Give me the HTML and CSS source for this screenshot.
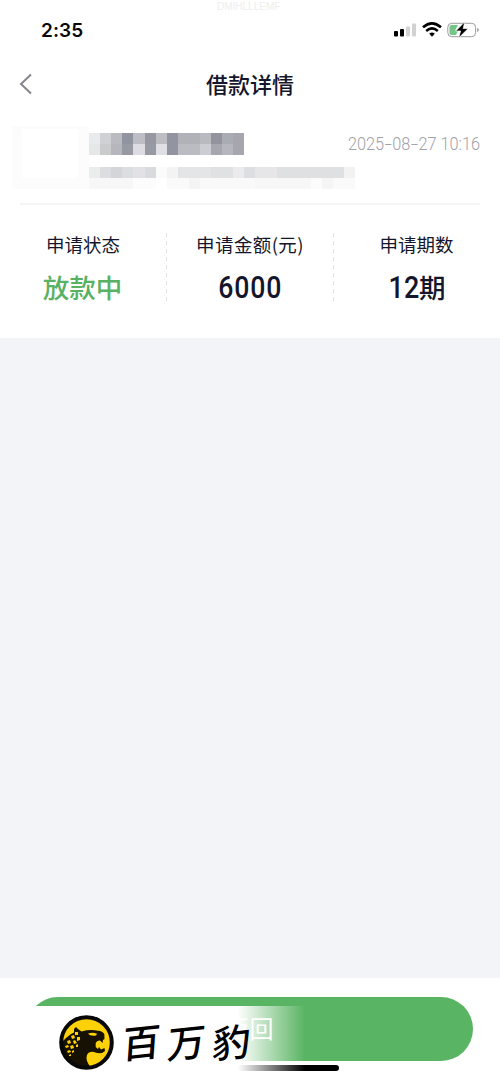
FILE: index.html
```html
<!DOCTYPE html>
<html lang="zh-CN">
<head>
<meta charset="UTF-8">
<title>借款详情</title>
<link rel="stylesheet" href="styles.css">
</head>
<body>
<div class="screen">
  <div class="faint-id">DMIHLLLEMF</div>
  <div class="status-bar">
    <span class="clock">2:35</span>
    <svg class="status-icons" width="88" height="20" viewBox="0 0 88 20">
      <rect x="1" y="11" width="4" height="5.5" rx="1"/>
      <rect x="7" y="9" width="4" height="7.500" rx="1"/>
      <rect x="13" y="6.500" width="4" height="10" rx="1" fill="#d2d2d2"/>
      <rect x="19" y="3.500" width="4" height="13" rx="1" fill="#d2d2d2"/>
      <g fill="none" stroke="#000" stroke-width="2.600">
        <path d="M30 7.300Q39 -0.500 48 7.300"/>
        <path d="M33.200 10.900Q39 6 44.800 10.900"/>
      </g>
      <path d="M39 16.700L36.200 13.700Q39 11.300 41.800 13.700Z"/>
      <rect x="54.800" y="3.300" width="27.800" height="13.400" rx="4" fill="#fff" stroke="#9b9b9b"/>
      <path d="M58.500 5H65L62 10.500H65L63 15H58.500Q56.500 15 56.500 13V7Q56.500 5 58.500 5Z" fill="#74c587"/>
      <path d="M84 8Q86 8.500 86 10T84 12Z" fill="#aaa"/>
      <path d="M71.800 1.800L62.700 11H67.600L65.600 18L75.200 8.500H70.200Z" stroke="#fff" stroke-width=".7"/>
    </svg>
  </div>
  <header class="nav">
    <svg class="back" width="14" height="22" viewBox="0 0 14 22"><path d="M12 1.500L2 11L12 20.500" fill="none" stroke="#85868c" stroke-width="2"/></svg>
    <h1 class="title">借款详情</h1>
  </header>
  <section class="product">
    <div class="logo-mask"></div>
    <svg class="mosaic" width="270" height="56" viewBox="0 0 270 56" shape-rendering="crispEdges">
      <path d="M0 0h11v11H0z" fill="#e9eaeb"/><path d="M11 0h11v11H11z" fill="#d0d1d4"/><path d="M22 0h11v11H22z" fill="#b9bbc1"/><path d="M33 0h11v11H33z" fill="#91949e"/><path d="M44 0h12v11H44z" fill="#bdbec5"/><path d="M56 0h11v11H56z" fill="#9698a1"/><path d="M67 0h11v11H67z" fill="#bdbec4"/><path d="M78 0h11v11H78z" fill="#9295a0"/><path d="M89 0h22v11H89z" fill="#b0b2b7"/><path d="M111 0h11v11H111z" fill="#b8bac0"/><path d="M122 0h11v11H122z" fill="#91949d"/><path d="M133 0h11v11H133z" fill="#aaacb3"/><path d="M144 0h11v11H144z" fill="#a5a6ae"/>
      <path d="M0 11h11v11H0z" fill="#e6e8e8"/><path d="M11 11h11v11H11z" fill="#c9cbcc"/><path d="M22 11h11v11H22z" fill="#b5b7bd"/><path d="M33 11h11v11H33z" fill="#989aa3"/><path d="M44 11h12v11H44z" fill="#dcdce2"/><path d="M56 11h11v11H56z" fill="#989aa3"/><path d="M67 11h11v11H67z" fill="#dfe0e5"/><path d="M78 11h11v11H78z" fill="#9295a0"/><path d="M89 11h22v11H89z" fill="#bbbcc1"/><path d="M111 11h11v11H111z" fill="#cccdd3"/><path d="M122 11h11v11H122z" fill="#a6a8b0"/><path d="M133 11h11v11H133z" fill="#b6b7be"/><path d="M144 11h11v11H144z" fill="#a5a6ae"/>
      <path d="M0 34h11v11H0z" fill="#ebecec"/><path d="M11 34h11v11H11z" fill="#dcdde0"/><path d="M22 34h11v11H22z" fill="#d4d5d9"/><path d="M33 34h11v11H33z" fill="#dcdde0"/><path d="M44 34h12v11H44z" fill="#e2e2e6"/><path d="M56 34h11v11H56z" fill="#d9dade"/><path d="M67 34h11v11H67z" fill="#fbfbfb"/><path d="M78 34h11v11H78z" fill="#f3f3f3"/><path d="M89 34h33v11H89z" fill="#e4e5e7"/><path d="M122 34h22v11H122z" fill="#e0e1e3"/><path d="M144 34h11v11H144z" fill="#ebebed"/><path d="M155 34h11v11H155z" fill="#dddee1"/><path d="M166 34h22v11H166z" fill="#e6e6e8"/><path d="M188 34h67v11H188z" fill="#dfe0e2"/><path d="M255 34h11v11H255z" fill="#f2f2f2"/>
      <path d="M0 45h44v11H0z" fill="#f7f7f8"/><path d="M44 45h23v11H44z" fill="#fcfcfc"/><path d="M78 45h22v11H78z" fill="#fafafa"/><path d="M100 45h11v11H100z" fill="#f4f4f4"/><path d="M111 45h55v11H111z" fill="#f9f9f9"/><path d="M166 45h56v11H166z" fill="#f7f7f7"/><path d="M222 45h11v11H222z" fill="#fcfcfc"/><path d="M233 45h11v11H233z" fill="#f5f5f5"/><path d="M244 45h22v11H244z" fill="#fafafa"/>
    </svg>
    <time class="date">2025<i>-</i>08<i>-</i>27 10:16</time>
  </section>
  <section class="facts">
    <div class="fact"><div class="label">申请状态</div><div class="value green">放款中</div></div>
    <div class="fact"><div class="label wide">申请金额(元)</div><div class="value"><span class="number amount">6000</span></div></div>
    <div class="fact"><div class="label">申请期数</div><div class="value term-value"><span class="number terms">12</span>期</div></div>
  </section>
  <main class="blank"></main>
  <footer class="footer">
    <div class="button">返回</div>
    <div class="home-bar"></div>
    <div class="brand">
      <svg class="leopard" width="55" height="55" viewBox="0 0 55 55">
        <circle cx="27.500" cy="27.500" r="25.300" fill="#fdd108"/>
        <path d="M3 27L7 23L12 19L15 17.500V14L17 12L19 14L22.500 16.500Q31 14 39 15.700Q43.500 16 45.300 19L45.500 24L44 25L43.500 28L41 25.500Q38 25 36.700 28V32L39 34L40 32L42 34.500L45.500 33L46 36L43 38Q37 38.500 35 37Q30 36 28 40Q26 45 32 53Q22 55 14 50Q4 43 3 27Z" fill="#171103"/>
        <path d="M29 18.500Q34 17 38 18.700L37 20.500Q31 21.500 29 18.500Z" fill="#fdd108"/>
        <g fill="#fdd108">
          <path d="M16 17l3 0 0 3-3 0zM12 21l3-1 1 3-3 1zM18 22l3 0 0 3-3 1zM8 26l3-1 1 3-3 1zM14 26l2-1 2 3-3 1zM6 31l3-1 1 2-3 1zM11 31l3-1 1 3-3 1zM17 30l2-1 0 3-2 0zM8 36l3-1 1 2-3 1zM13 36l2-1 0 2-2 1zM10 40l2-1 0 2-2 0z"/>
        </g>
        <circle cx="27.500" cy="27.500" r="25.300" fill="none" stroke="#080808" stroke-width="4"/>
      </svg>
      <span class="brand-name"><span>百</span><span>万</span><span>豹</span></span>
    </div>
  </footer>
</div>
</body>
</html>
```
FILE: styles.css
```css
* { box-sizing: border-box; }
body { margin: 0; background: #fff; font-family: "Liberation Sans", "Noto Sans CJK SC", sans-serif; color: #15162b; }
.screen { width: 500px; height: 1081px; display: flex; flex-direction: column; overflow: hidden; }
.faint-id { height: 14px; padding-left: 217px; font-size: 10px; line-height: 14px; color: #eee; white-space: nowrap; }
.status-bar { height: 38px; display: flex; justify-content: space-between; padding: 7px 20px 0 41px; }
.clock { font: 600 19px/20px Inter, sans-serif; color: #080808; letter-spacing: .1px; }
.status-icons { margin: -1px -1px 0 0; }
.nav { height: 66px; display: grid; grid-template-columns: 60px 1fr 60px; align-items: center; }
.back { margin-left: 19px; margin-top: -2px; }
.title { margin: -4px 0 0; text-align: center; font: 500 22px/32px "Noto Sans CJK SC", sans-serif; }
.product { height: 87px; margin: 0 20px; display: flex; border-bottom: 2px solid #f5f5f5; padding-top: 8px; }
.logo-mask { flex: none; width: 77px; height: 63px; margin-left: -8px; border: solid #fcfcfc; border-width: 3px 11px 11px 10px; }
.mosaic { flex: none; margin-top: 7px; }
.date { width: 140px; flex: none; margin: 8px 0 0 -11px; font: 300 18px/20px Roboto, sans-serif; color: #9fa1a8; white-space: nowrap; transform-origin: left; transform: scaleX(.905); }
.date i { display: inline-block; width: 9px; text-align: center; font-style: normal; transform: scaleX(1.6); }
.facts { height: 133px; padding-top: 28px; display: grid; grid-template-columns: 167px 167px 166px; }
.fact { height: 71px; text-align: center; background: repeating-linear-gradient(#e1e1e4 0 4px, transparent 4px 8px) right / 1px 100% no-repeat; }
.fact:last-child { background: none; }
.label { margin: -1px 0 0 -1px; font: 400 18.5px/24px "Noto Sans CJK SC", sans-serif; }
.wide { letter-spacing: .4px; }
.value { font: 500 26.5px/38px "Noto Sans CJK SC", sans-serif; margin-top: 12px; }
.green { color: #59b163; margin-left: -2px; }
.term-value { margin-left: -5px; }
.number { display: inline-block; font: 500 31px/38px Roboto, sans-serif; }
.amount { letter-spacing: 1px; transform: scaleX(.86); }
.terms { transform: scaleX(.87); transform-origin: right; }
.blank { height: 640px; background: #f3f4f8; }
.footer { height: 103px; padding: 19px 27px 0 26px; position: relative; }
.button { height: 64px; border-radius: 32px; background: #59b463; color: #fff; text-align: center; font: 400 24px/62px "Noto Sans CJK SC", sans-serif; }
.home-bar { width: 178px; height: 6px; margin: 4px auto 0; border-radius: 3px; background: #000; }
.brand { position: absolute; left: 0; top: 28px; width: 305px; height: 75px; background: linear-gradient(90deg, #fff 238px, transparent 305px); display: flex; padding: 9px 0 0 59px; }
.leopard { flex: none; }
.brand-name { display: flex; gap: 7px; margin: 4px 0 0 8px; font: 500 38px/44px "Noto Sans CJK SC", sans-serif; color: #000; }
.brand-name span { transform: skewY(-6deg) skewX(-4deg); }
```
